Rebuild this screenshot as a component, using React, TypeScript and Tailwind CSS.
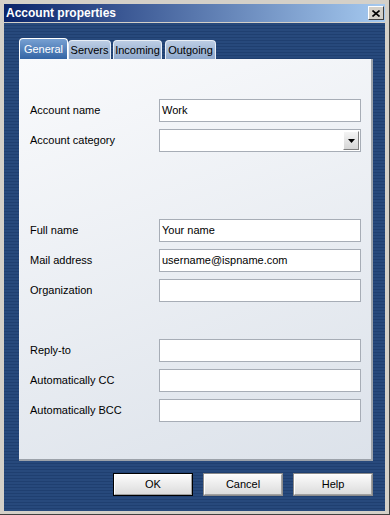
import React from "react";

const font = { fontFamily: '"Liberation Sans", Arial, sans-serif' };

function Field({ label, value, dropdown }: { label: string; value?: string; dropdown?: boolean }) {
  return (
    <div className="flex items-center h-[23px]">
      <div className="w-[129px] text-[11px] text-black leading-none">{label}</div>
      <div className="relative w-[202px] h-[23px] bg-white border border-[#a7adb6] flex items-center pl-[2px] text-[11px] text-black">
        {value}
        {dropdown && (
          <div className="absolute right-[1px] top-[1px] w-[16px] h-[19px] bg-[linear-gradient(#f4f4f4,#d6d6d6)] border-t border-l border-t-white border-l-white border-r border-b border-r-[#808080] border-b-[#808080] flex items-center justify-center">
            <svg width="7" height="4" viewBox="0 0 7 4"><path d="M0 0H7L3.5 4Z" fill="#000" /></svg>
          </div>
        )}
      </div>
    </div>
  );
}

function Btn({ label, def }: { label: string; def?: boolean }) {
  return (
    <div className={"w-[80px] h-[23px] " + (def ? "border border-black" : "border border-[#8a8a8a]")}>
      <div className="w-full h-full bg-[linear-gradient(#fbfbfb,#dcdcdc)] border-t border-l border-t-white border-l-white border-r border-b border-r-[#a0a0a0] border-b-[#a0a0a0] flex items-center justify-center text-[11px] text-black">
        {label}
      </div>
    </div>
  );
}

export default function App() {
  return (
    <div style={font} className="w-[390px] h-[515px] bg-[#d4d0c8] border-r border-b border-[#404040] flex flex-col pl-[4px] pt-[4px] pr-[4px] pb-[3px]">
      <div className="h-[18px] bg-[linear-gradient(to_right,#0a246a,#a6caf0)] flex items-center justify-between pl-[2px] pr-[1px] shrink-0">
        <span className="text-white font-bold text-[12px] leading-none">Account properties</span>
        <div className="w-[16px] h-[14px] bg-[#d4d0c8] border-t border-l border-t-white border-l-white border-r border-b border-r-[#404040] border-b-[#404040] flex items-center justify-center">
          <svg width="8" height="7" viewBox="0 0 8 7"><path d="M0.5 0.5L7.5 6.5M7.5 0.5L0.5 6.5" stroke="#000" strokeWidth="1.6" /></svg>
        </div>
      </div>
      <div className="h-[1px] shrink-0" />
      <div className="flex-1 flex flex-col pl-[15px] pr-[11px] pt-[15px] bg-[repeating-linear-gradient(to_bottom,#27497c_0px,#27497c_2px,#1f3f70_2px,#1f3f70_3px)]">
        <div className="h-[21px] flex items-end">
          <div className="w-[49px] h-[21px] rounded-t-[4px] border-t border-l border-r border-white bg-[linear-gradient(#77a0d2,#3465a5)] flex items-center justify-center text-white text-[11px]">General</div>
          <div className="w-[43px] h-[19px] rounded-t-[4px] border-t border-l border-r border-[#e8eef6] bg-[linear-gradient(#bccde4,#8ea8cc)] flex items-center justify-center text-black text-[11px]">Servers</div>
          <div className="ml-[2px] w-[49px] h-[19px] rounded-t-[4px] border-t border-l border-r border-[#e8eef6] bg-[linear-gradient(#bccde4,#8ea8cc)] flex items-center justify-center text-black text-[11px]">Incoming</div>
          <div className="ml-[3px] w-[51px] h-[19px] rounded-t-[4px] border-t border-l border-r border-[#e8eef6] bg-[linear-gradient(#bccde4,#8ea8cc)] flex items-center justify-center text-black text-[11px]">Outgoing</div>
        </div>
        <div className="w-[354px] h-[402px] bg-[linear-gradient(160deg,#f9fafc,#dce2ea)] border-r-2 border-b-2 border-[#9ca2aa] pl-[11px] flex flex-col">
          <div className="mt-[40px] flex flex-col gap-[7px]">
            <Field label="Account name" value="Work" />
            <Field label="Account category" dropdown />
          </div>
          <div className="mt-[67px] flex flex-col gap-[7px]">
            <Field label="Full name" value="Your name" />
            <Field label="Mail address" value="username@ispname.com" />
            <Field label="Organization" />
          </div>
          <div className="mt-[37px] flex flex-col gap-[7px]">
            <Field label="Reply-to" />
            <Field label="Automatically CC" />
            <Field label="Automatically BCC" />
          </div>
        </div>
        <div className="mt-[12px] flex justify-end gap-[10px] pr-[1px]">
          <Btn label="OK" def />
          <Btn label="Cancel" />
          <Btn label="Help" />
        </div>
      </div>
    </div>
  );
}
